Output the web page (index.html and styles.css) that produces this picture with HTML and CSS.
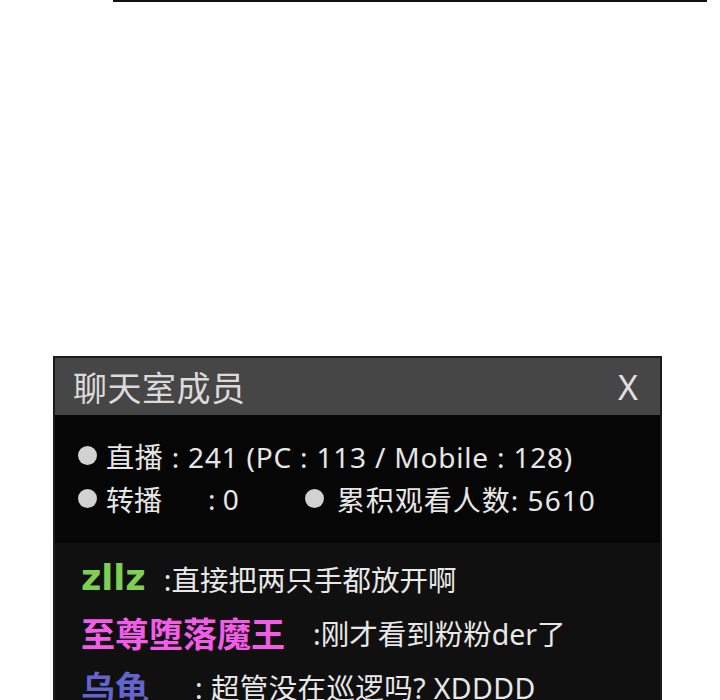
FILE: index.html
```html
<!DOCTYPE html>
<html lang="zh-CN">
<head>
<meta charset="utf-8">
<title>聊天室成员</title>
<link rel="stylesheet" href="styles.css">
</head>
<body>
<div class="topline"></div>
<section class="panel">
  <header class="panel-head">
    <h1 class="panel-title">聊天室成员</h1>
    <span class="panel-close">X</span>
  </header>
  <div class="stats">
    <div class="stat-row">
      <span class="dot"></span><span class="stat-text stat-wide">直播 : 241 (PC : 113 / Mobile : 128)</span>
    </div>
    <div class="stat-row">
      <span class="dot"></span><span class="stat-text">转播</span><span class="stat-zero">: 0</span>
      <span class="dot dot-far"></span><span class="stat-text stat-total">累积观看人数: 5610</span>
    </div>
  </div>
  <div class="chat">
    <div class="msg"><span class="nick nick-green">zllz</span><span class="msg-text msg-a">:直接把两只手都放开啊</span></div>
    <div class="msg"><span class="nick nick-pink">至尊堕落魔王</span><span class="msg-text msg-b">:刚才看到粉粉der了</span></div>
    <div class="msg"><span class="nick nick-blue">乌龟</span><span class="msg-text msg-c">: 超管没在巡逻吗? XDDDD</span></div>
  </div>
</section>
</body>
</html>
```

FILE: styles.css
```css
html, body {
  margin: 0;
  padding: 0;
  background: #ffffff;
  height: 700px;
  overflow: hidden;
}

body {
  font-family: "Noto Sans", "Noto Sans CJK SC", sans-serif;
}

.topline {
  margin-left: 113px;
  width: 594px;
  height: 2px;
  background: #111111;
}

.panel {
  margin: 354px 0 0 53px;
  width: 605px;
  border: 2px solid #1c1c1c;
  background: #060606;
}

.panel-head {
  height: 57px;
  background: #464646;
  display: flex;
  align-items: center;
  justify-content: space-between;
  padding: 0 22px 0 18px;
}

.panel-title {
  margin: 0;
  font-weight: 400;
  font-size: 34px;
  color: #dadada;
  letter-spacing: 0.5px;
}

.panel-close {
  font-size: 34px;
  color: #e0e0e0;
}

.stats {
  height: 128px;
  padding: 19px 0 0 23px;
  box-sizing: border-box;
  background: #060606;
}

.stat-row {
  display: flex;
  align-items: center;
  height: 43px;
  color: #e6e6e6;
  font-size: 28px;
}

.stat-wide {
  letter-spacing: 0.8px;
}

.stat-total {
  letter-spacing: 1px;
}

.dot {
  width: 19px;
  height: 19px;
  border-radius: 50%;
  background: #d2d2d2;
  margin-right: 9px;
  flex: none;
}

.dot-far {
  margin-left: 66px;
  margin-right: 13px;
}

.stat-zero {
  margin-left: 46px;
}

.chat {
  background: #101010;
  padding: 8px 0 0 26px;
  height: 160px;
  box-sizing: border-box;
}

.msg {
  display: flex;
  align-items: center;
  height: 54px;
}

.nick {
  font-size: 34px;
  font-weight: 700;
}

.nick-green {
  color: #7fcf52;
  font-family: "DejaVu Sans", "Noto Sans", sans-serif;
  font-size: 35px;
}

.nick-pink {
  color: #f35ce6;
}

.nick-blue {
  color: #6464cc;
}

.msg-text {
  font-size: 28.5px;
  color: #e8e8e8;
}

.msg-a {
  margin-left: 18px;
}

.msg-b {
  margin-left: 28px;
}

.msg-c {
  margin-left: 46px;
  letter-spacing: 0.4px;
}
```
